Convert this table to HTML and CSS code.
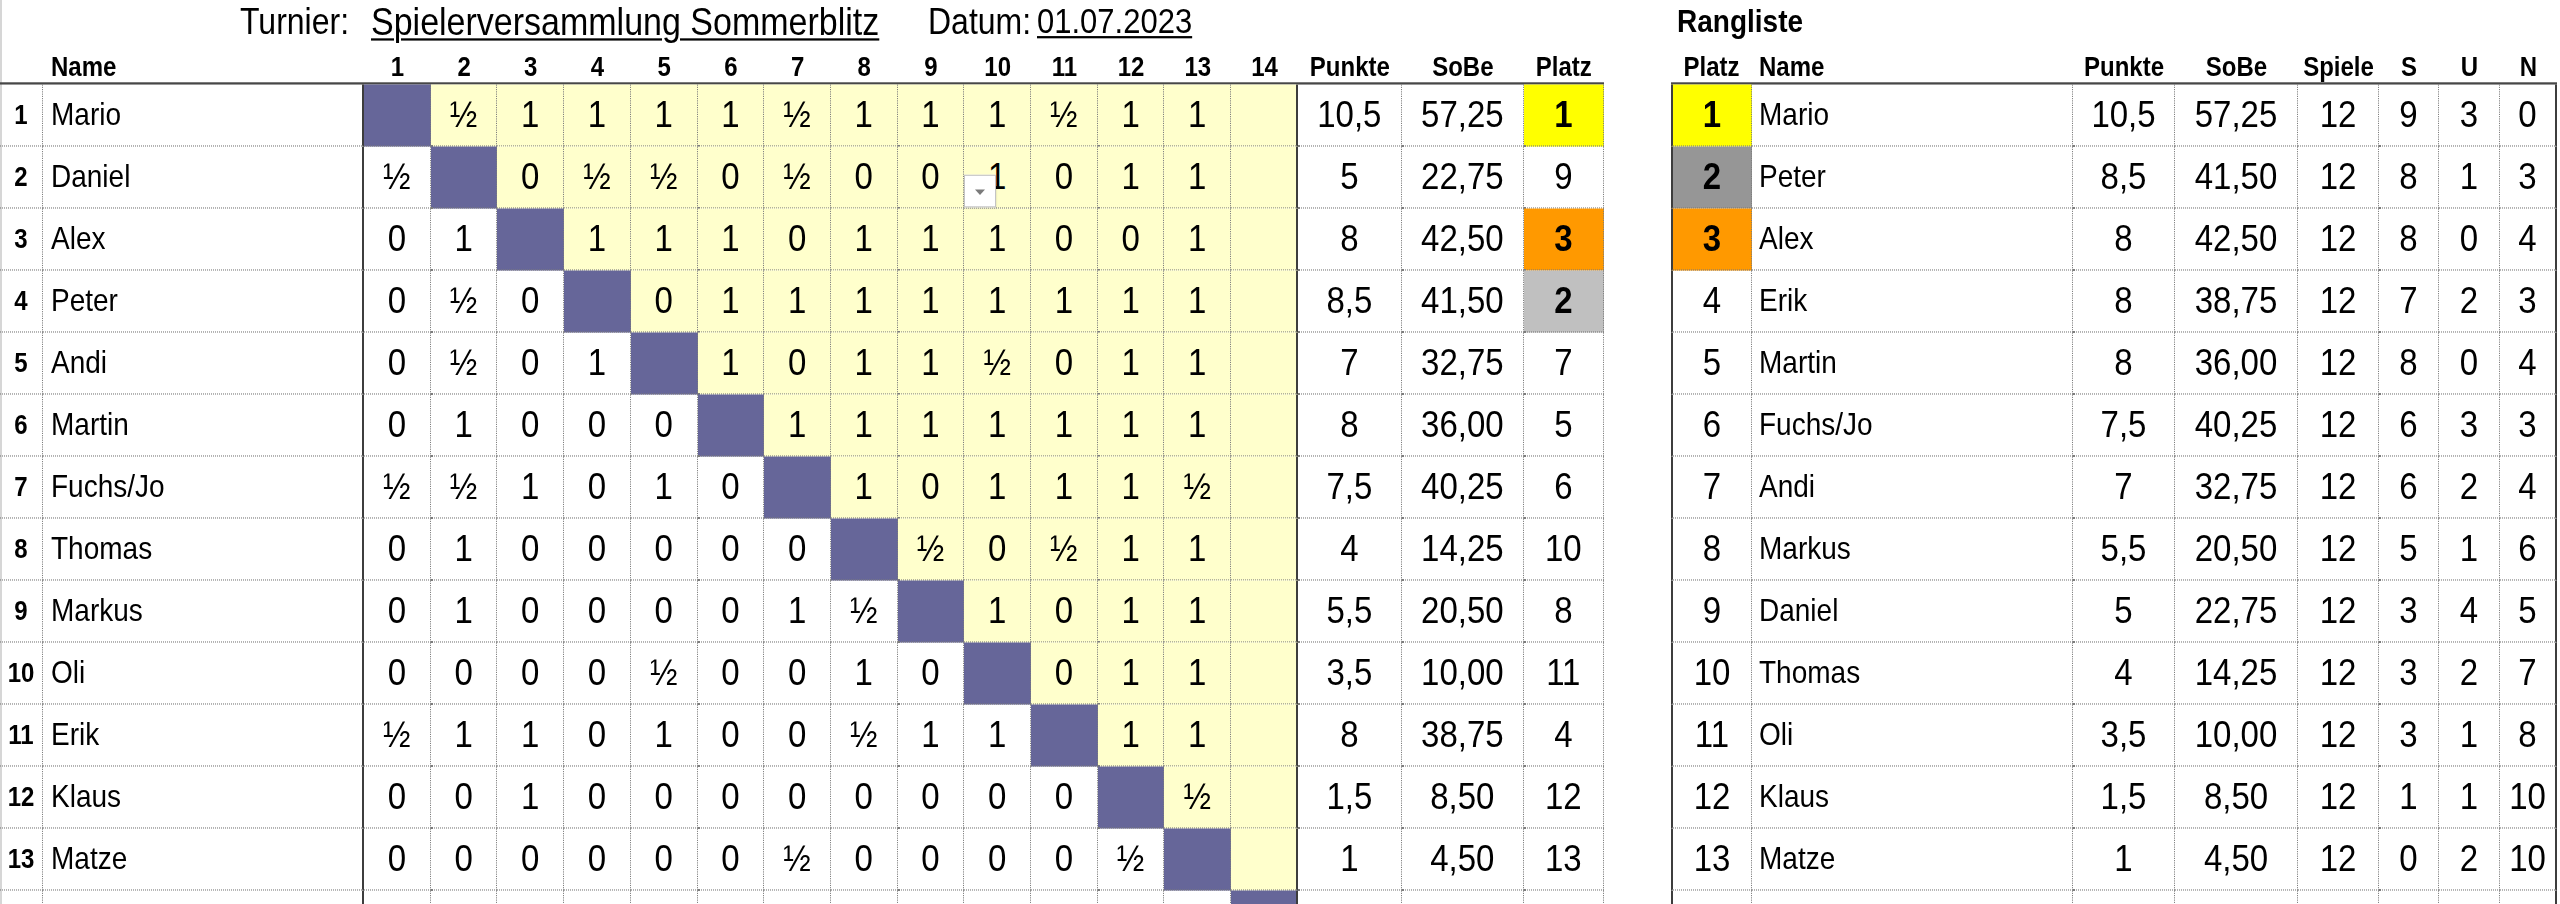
FILE: index.html
```html
<!DOCTYPE html>
<html lang="de">
<head>
<meta charset="utf-8">
<title>Turnier: Spielerversammlung Sommerblitz</title>
<link rel="stylesheet" href="styles.css">
</head>
<body>
<main class="sheet">
<section class="cross">
  <div class="title">
    <span class="lbl1">Turnier:</span>
    <span class="tname">Spielerversammlung Sommerblitz</span>
    <span class="lbl2">Datum:</span>
    <span class="tdate">01.07.2023</span>
  </div>
  <div class="row head">
    <div></div><div class="hl">Name</div>
    <div>1</div><div>2</div><div>3</div><div>4</div><div>5</div><div>6</div><div>7</div><div>8</div><div>9</div><div>10</div><div>11</div><div>12</div><div>13</div><div>14</div>
    <div>Punkte</div><div>SoBe</div><div>Platz</div>
  </div>
  <div class="row">
    <div class="n">1</div><div class="nm">Mario</div>
    <div class="x"></div><div class="y">½</div><div class="y">1</div><div class="y">1</div><div class="y">1</div><div class="y">1</div><div class="y">½</div><div class="y">1</div><div class="y">1</div><div class="y">1</div><div class="y">½</div><div class="y">1</div><div class="y">1</div><div class="y"></div>
    <div>10,5</div><div>57,25</div><div class="gold">1</div>
  </div>
  <div class="row">
    <div class="n">2</div><div class="nm">Daniel</div>
    <div>½</div><div class="x"></div><div class="y">0</div><div class="y">½</div><div class="y">½</div><div class="y">0</div><div class="y">½</div><div class="y">0</div><div class="y">0</div><div class="y dd-cell">1<span class="dd"></span></div><div class="y">0</div><div class="y">1</div><div class="y">1</div><div class="y"></div>
    <div>5</div><div>22,75</div><div>9</div>
  </div>
  <div class="row">
    <div class="n">3</div><div class="nm">Alex</div>
    <div>0</div><div>1</div><div class="x"></div><div class="y">1</div><div class="y">1</div><div class="y">1</div><div class="y">0</div><div class="y">1</div><div class="y">1</div><div class="y">1</div><div class="y">0</div><div class="y">0</div><div class="y">1</div><div class="y"></div>
    <div>8</div><div>42,50</div><div class="bronze">3</div>
  </div>
  <div class="row">
    <div class="n">4</div><div class="nm">Peter</div>
    <div>0</div><div>½</div><div>0</div><div class="x"></div><div class="y">0</div><div class="y">1</div><div class="y">1</div><div class="y">1</div><div class="y">1</div><div class="y">1</div><div class="y">1</div><div class="y">1</div><div class="y">1</div><div class="y"></div>
    <div>8,5</div><div>41,50</div><div class="silver">2</div>
  </div>
  <div class="row">
    <div class="n">5</div><div class="nm">Andi</div>
    <div>0</div><div>½</div><div>0</div><div>1</div><div class="x"></div><div class="y">1</div><div class="y">0</div><div class="y">1</div><div class="y">1</div><div class="y">½</div><div class="y">0</div><div class="y">1</div><div class="y">1</div><div class="y"></div>
    <div>7</div><div>32,75</div><div>7</div>
  </div>
  <div class="row">
    <div class="n">6</div><div class="nm">Martin</div>
    <div>0</div><div>1</div><div>0</div><div>0</div><div>0</div><div class="x"></div><div class="y">1</div><div class="y">1</div><div class="y">1</div><div class="y">1</div><div class="y">1</div><div class="y">1</div><div class="y">1</div><div class="y"></div>
    <div>8</div><div>36,00</div><div>5</div>
  </div>
  <div class="row">
    <div class="n">7</div><div class="nm">Fuchs/Jo</div>
    <div>½</div><div>½</div><div>1</div><div>0</div><div>1</div><div>0</div><div class="x"></div><div class="y">1</div><div class="y">0</div><div class="y">1</div><div class="y">1</div><div class="y">1</div><div class="y">½</div><div class="y"></div>
    <div>7,5</div><div>40,25</div><div>6</div>
  </div>
  <div class="row">
    <div class="n">8</div><div class="nm">Thomas</div>
    <div>0</div><div>1</div><div>0</div><div>0</div><div>0</div><div>0</div><div>0</div><div class="x"></div><div class="y">½</div><div class="y">0</div><div class="y">½</div><div class="y">1</div><div class="y">1</div><div class="y"></div>
    <div>4</div><div>14,25</div><div>10</div>
  </div>
  <div class="row">
    <div class="n">9</div><div class="nm">Markus</div>
    <div>0</div><div>1</div><div>0</div><div>0</div><div>0</div><div>0</div><div>1</div><div>½</div><div class="x"></div><div class="y">1</div><div class="y">0</div><div class="y">1</div><div class="y">1</div><div class="y"></div>
    <div>5,5</div><div>20,50</div><div>8</div>
  </div>
  <div class="row">
    <div class="n">10</div><div class="nm">Oli</div>
    <div>0</div><div>0</div><div>0</div><div>0</div><div>½</div><div>0</div><div>0</div><div>1</div><div>0</div><div class="x"></div><div class="y">0</div><div class="y">1</div><div class="y">1</div><div class="y"></div>
    <div>3,5</div><div>10,00</div><div>11</div>
  </div>
  <div class="row">
    <div class="n">11</div><div class="nm">Erik</div>
    <div>½</div><div>1</div><div>1</div><div>0</div><div>1</div><div>0</div><div>0</div><div>½</div><div>1</div><div>1</div><div class="x"></div><div class="y">1</div><div class="y">1</div><div class="y"></div>
    <div>8</div><div>38,75</div><div>4</div>
  </div>
  <div class="row">
    <div class="n">12</div><div class="nm">Klaus</div>
    <div>0</div><div>0</div><div>1</div><div>0</div><div>0</div><div>0</div><div>0</div><div>0</div><div>0</div><div>0</div><div>0</div><div class="x"></div><div class="y">½</div><div class="y"></div>
    <div>1,5</div><div>8,50</div><div>12</div>
  </div>
  <div class="row">
    <div class="n">13</div><div class="nm">Matze</div>
    <div>0</div><div>0</div><div>0</div><div>0</div><div>0</div><div>0</div><div>½</div><div>0</div><div>0</div><div>0</div><div>0</div><div>½</div><div class="x"></div><div class="y"></div>
    <div>1</div><div>4,50</div><div>13</div>
  </div>
  <div class="row">
    <div class="n"></div><div class="nm"></div>
    <div></div><div></div><div></div><div></div><div></div><div></div><div></div><div></div><div></div><div></div><div></div><div></div><div></div><div class="x"></div>
    <div></div><div></div><div></div>
  </div>
</section>

<section class="rank">
  <div class="title">Rangliste</div>
  <div class="row head">
    <div>Platz</div><div class="hl">Name</div><div>Punkte</div><div>SoBe</div><div>Spiele</div><div>S</div><div>U</div><div>N</div>
  </div>
  <div class="row"><div class="gold">1</div><div class="nm">Mario</div><div>10,5</div><div>57,25</div><div>12</div><div>9</div><div>3</div><div>0</div></div>
  <div class="row"><div class="silver2">2</div><div class="nm">Peter</div><div>8,5</div><div>41,50</div><div>12</div><div>8</div><div>1</div><div>3</div></div>
  <div class="row"><div class="bronze">3</div><div class="nm">Alex</div><div>8</div><div>42,50</div><div>12</div><div>8</div><div>0</div><div>4</div></div>
  <div class="row"><div>4</div><div class="nm">Erik</div><div>8</div><div>38,75</div><div>12</div><div>7</div><div>2</div><div>3</div></div>
  <div class="row"><div>5</div><div class="nm">Martin</div><div>8</div><div>36,00</div><div>12</div><div>8</div><div>0</div><div>4</div></div>
  <div class="row"><div>6</div><div class="nm">Fuchs/Jo</div><div>7,5</div><div>40,25</div><div>12</div><div>6</div><div>3</div><div>3</div></div>
  <div class="row"><div>7</div><div class="nm">Andi</div><div>7</div><div>32,75</div><div>12</div><div>6</div><div>2</div><div>4</div></div>
  <div class="row"><div>8</div><div class="nm">Markus</div><div>5,5</div><div>20,50</div><div>12</div><div>5</div><div>1</div><div>6</div></div>
  <div class="row"><div>9</div><div class="nm">Daniel</div><div>5</div><div>22,75</div><div>12</div><div>3</div><div>4</div><div>5</div></div>
  <div class="row"><div>10</div><div class="nm">Thomas</div><div>4</div><div>14,25</div><div>12</div><div>3</div><div>2</div><div>7</div></div>
  <div class="row"><div>11</div><div class="nm">Oli</div><div>3,5</div><div>10,00</div><div>12</div><div>3</div><div>1</div><div>8</div></div>
  <div class="row"><div>12</div><div class="nm">Klaus</div><div>1,5</div><div>8,50</div><div>12</div><div>1</div><div>1</div><div>10</div></div>
  <div class="row"><div>13</div><div class="nm">Matze</div><div>1</div><div>4,50</div><div>12</div><div>0</div><div>2</div><div>10</div></div>
  <div class="row"><div></div><div class="nm"></div><div></div><div></div><div></div><div></div><div></div><div></div></div>
</section>
</main>
</body>
</html>
```

FILE: styles.css
```css
* {
  box-sizing: border-box;
  margin: 0;
  padding: 0;
}

html,
body {
  width: 2560px;
  height: 904px;
  overflow: hidden;
  background: #ffffff;
}

body {
  font-family: "Liberation Sans", Arial, Helvetica, sans-serif;
  color: #000000;
  box-shadow: inset 2px 0 0 #d6d6d6;
}

/* The spreadsheet capture is slightly taller than plain Arial:
   heights below are given before a vertical scale of 62/55. */
.sheet {
  display: flex;
  align-items: flex-start;
  gap: 67px;
  transform: scaleY(1.12727);
  transform-origin: 0 0;
}

.cross {
  flex: none;
  width: 1604px;
}

.rank {
  flex: none;
  width: 886px;
}

/* ---------- title lines ---------- */
.title {
  height: 41px;
  display: flex;
  align-items: flex-start;
  padding-top: 3px;
  font-size: 32px;
  line-height: 32px;
  white-space: nowrap;
}

.title .lbl1 {
  width: 371px;
  padding-left: 240px;
}

.title .tname {
  width: 557px;
  font-size: 34px;
}

.title .lbl2 {
  width: 106px;
}

.title .tdate {
  padding-left: 3px;
  font-size: 31px;
}

.title .tname,
.title .tdate {
  text-decoration: underline;
  text-decoration-thickness: 2px;
  text-underline-offset: 3px;
}

.rank .title {
  font-size: 28px;
  font-weight: bold;
  padding: 4px 0 0 6px;
  line-height: 30px;
}

/* ---------- rows ---------- */
.row {
  display: grid;
  height: 55px;
  font-size: 33px;
}

.cross .row {
  grid-template-columns: 43px 321px repeat(14, 66.714px) 104px 122px 80px;
}

.rank .row {
  grid-template-columns: 81px 321px 102px 123px 81px 60px 61px 57px;
}

.row > div {
  display: flex;
  align-items: center;
  justify-content: center;
  white-space: nowrap;
  border-right: 1px dotted #7c7c7c;
  border-bottom: 1px dotted #7c7c7c;
}

.row.head {
  height: 34.4px;
  font-size: 24px;
  font-weight: bold;
  border-bottom: 2px solid #474747;
}

.row.head > div {
  border: 0;
  align-items: flex-end;
  padding-bottom: 1px;
  line-height: 26px;
}

.row.head > .hl {
  justify-content: flex-start;
  padding-left: 8px;
}

.rank .row.head > .hl {
  padding-left: 7px;
}

/* strong vertical rules */
.cross .row:not(.head) > div:nth-child(2),
.cross .row:not(.head) > div:nth-child(16),
.cross .row:not(.head) > div:nth-child(20) {
  border-right: 2px solid #3d3d3d;
}

.rank .row:not(.head) > div:first-child {
  border-left: 2px solid #3d3d3d;
}

.rank .row:not(.head) > div:last-child {
  border-right: 2px solid #3d3d3d;
}

/* cell kinds */
.n {
  font-size: 24px;
  font-weight: bold;
}

.nm {
  justify-content: flex-start !important;
  padding-left: 8px;
  font-size: 28px;
}

.rank .nm {
  padding-left: 7px;
}

.y {
  background: #ffffcc;
}

.x {
  background: #666699;
}

.gold {
  background: #ffff00;
  font-weight: bold;
}

.silver {
  background: #c0c0c0;
  font-weight: bold;
}

.silver2 {
  background: #969696;
  font-weight: bold;
}

.bronze {
  background: #ff9900;
  font-weight: bold;
}

/* data validation drop-down button */
.dd-cell {
  position: relative;
}

.dd {
  position: absolute;
  left: 0;
  top: 25px;
  width: 32px;
  height: 29px;
  background: #ffffff;
  border: 1px solid #c4c4c4;
  box-shadow: 1px 1px 1px rgba(0, 0, 0, 0.08);
}

.dd::after {
  content: "";
  position: absolute;
  left: 50%;
  top: 50%;
  margin: -2px 0 0 -5px;
  border-left: 5px solid transparent;
  border-right: 5px solid transparent;
  border-top: 5px solid #7a7a7a;
}
```
